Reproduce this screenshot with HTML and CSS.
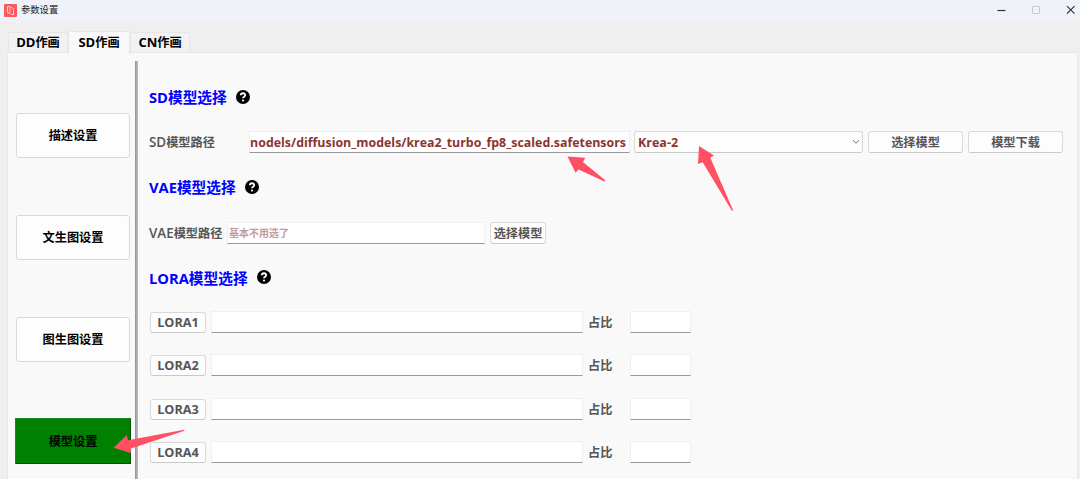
FILE: index.html
```html
<!DOCTYPE html>
<html lang="zh-CN">
<head>
<meta charset="utf-8">
<title>参数设置</title>
<link rel="stylesheet" href="styles.css">
</head>
<body>
<svg width="0" height="0" class="defs"><symbol id="help" viewBox="0 0 14 14"><circle cx="7" cy="7" r="7" fill="#000"/><path d="M4.8 5.3C4.9 2.6 9.2 2.6 9.2 5.1C9.2 6.7 7 6.7 7 8.3" fill="none" stroke="#fff" stroke-width="1.8"/><circle cx="7" cy="10.5" r="1.1" fill="#fff"/></symbol></svg>
<header class="titlebar">
  <svg class="app-icon" width="13" height="13" viewBox="0 0 13 13"><rect width="13" height="13" rx="1" fill="#fb5a5c"/><path d="M3.500 2.500H6V9.500L3.500 8.500ZM6.500 3.500H8L9.500 5V10.500H7" fill="none" stroke="#ffc4c3" stroke-width="1"/></svg>
  <span class="title">参数设置</span>
  <svg class="controls" width="84" height="22" viewBox="0 0 84 22" fill="none"><path d="M1.500 10.500H9.500" stroke="#333" stroke-width="1.2"/><rect x="36.5" y="6.500" width="7" height="7" rx=".5" stroke="#c7cbd0"/><path d="M71 6.2L78.500 13.700M78.500 6.200L71 13.700" stroke="#333" stroke-width="1.200"/></svg>
</header>
<nav class="tabs">
  <div class="tab"><span class="latin">DD</span>作画</div>
  <div class="tab active"><span class="latin">SD</span>作画</div>
  <div class="tab"><span class="latin">CN</span>作画</div>
</nav>
<main class="panel">
  <aside class="sidebar">
    <div class="side-btn">描述设置</div>
    <div class="side-btn">文生图设置</div>
    <div class="side-btn">图生图设置</div>
    <div class="side-btn selected">模型设置</div>
  </aside>
  <div class="divider"></div>
  <section class="content">
    <h2 class="heading h-sd"><span>SD模型选择</span><svg class="help"><use href="#help"/></svg></h2>
    <div class="row sd-row">
      <span class="label sd-label"><span class="latin">SD</span>模型路径</span>
      <div class="field path"><span>nodels/diffusion_models/krea2_turbo_fp8_scaled.safetensors</span></div>
      <div class="btn combo"><span>Krea-2</span><svg width="8" height="6" viewBox="0 0 8 6"><path d="M1 1L4 4.300L7 1" fill="none" stroke="#777"/></svg></div>
      <div class="btn wide">选择模型</div>
      <div class="btn wide">模型下载</div>
    </div>
    <h2 class="heading h-vae"><span>VAE模型选择</span><svg class="help"><use href="#help"/></svg></h2>
    <div class="row vae-row">
      <span class="label vae-label"><span class="latin">VAE</span>模型路径</span>
      <div class="field vae">基本不用选了</div>
      <div class="btn pick">选择模型</div>
    </div>
    <h2 class="heading h-lora"><span>LORA模型选择</span><svg class="help"><use href="#help"/></svg></h2>
    <div class="loras">
      <div class="row"><div class="btn lora">LORA1</div><div class="field file"></div><span class="label ratio">占比</span><div class="field num"></div></div>
      <div class="row"><div class="btn lora">LORA2</div><div class="field file"></div><span class="label ratio">占比</span><div class="field num"></div></div>
      <div class="row"><div class="btn lora">LORA3</div><div class="field file"></div><span class="label ratio">占比</span><div class="field num"></div></div>
      <div class="row"><div class="btn lora">LORA4</div><div class="field file"></div><span class="label ratio">占比</span><div class="field num"></div></div>
    </div>
  </section>
</main>
<svg class="arrows" width="1080" height="479" viewBox="0 0 1080 479" fill="#ff5163">
  <path d="M567.500 156.500L585.300 157.700L583 162L605.500 180.500L604.500 181.500L578.500 169.500L575.500 172.800Z"/>
  <path d="M699 146L714 155.600L710.300 157.800L733 210L732 211L702.700 162.200L698 164Z"/>
  <path d="M113.500 447.700L126.700 435L128 440.200L184 429.700L184.500 430.800L131 448.500L130.700 453Z"/>
</svg>
</body>
</html>
```
FILE: styles.css
```css
* { box-sizing: border-box; }
body {
  margin: 0;
  width: 1080px;
  height: 479px;
  overflow: hidden;
  background: #efefef;
  color: #555;
  font: 600 12.2px/20px "Open Sans", "Noto Sans CJK SC", sans-serif;
  white-space: nowrap;
  display: flex;
  flex-direction: column;
}
.defs { position: absolute; }
.titlebar {
  height: 22px;
  flex: none;
  background: #eff3f9;
  display: flex;
  align-items: center;
  padding: 0 0 2px 4px;
}
.title {
  margin-left: 4px;
  color: #222;
  font-size: 9.3px;
  font-weight: 400;
}
.controls { margin: 2px 0 0 auto; }
.tabs {
  display: flex;
  align-items: flex-end;
  flex: none;
  height: 31px;
  padding-left: 8px;
  color: #000;
  font-weight: 700;
}
.tab {
  width: 60px;
  height: 21px;
  border: 1px solid #e7e7e7;
  border-bottom: 0;
  background: #f2f2f2;
  text-align: center;
  line-height: 18px;
}
.tab .latin { font-size: 13px; }
.tab.active {
  width: 62px;
  height: 23px;
  background: #f9f9f9;
  z-index: 1;
  margin-bottom: -1px;
  line-height: 20px;
}
.panel {
  flex: 1;
  min-height: 0;
  margin: -1px 2px 0 7px;
  border: 1px solid #e8e8e8;
  border-bottom: 0;
  background: #f9f9f9;
  display: flex;
}
.sidebar {
  width: 127px;
  padding: 60px 0 0 8px;
  display: flex;
  flex-direction: column;
  gap: 57px;
}
.side-btn {
  flex: none;
  width: 114px;
  height: 45px;
  border: 1px solid #d9d9d9;
  border-radius: 3px;
  background: #fdfdfd;
  color: #000;
  font-weight: 700;
  text-align: center;
  line-height: 44px;
}
.side-btn.selected {
  width: 116px;
  height: 46px;
  margin: -1px 0 0 -1px;
  border-color: #168a16 #0b4d0b #0b4d0b #168a16;
  border-radius: 0;
  background: #008000;
  line-height: 46px;
}
.divider {
  width: 3px;
  margin-top: 8px;
  background: #aaa;
  border-left: 1px solid #999;
  border-right: 1px solid #b8b8b8;
}
.content { padding: 32px 0 0 11px; flex: 1; }
.heading {
  height: 24px;
  margin: 0;
  display: flex;
  align-items: center;
  gap: 9px;
  color: #00f;
  font-size: 14.700px;
  font-weight: 700;
  line-height: 24px;
}
.h-lora span { padding-top: 1px; }
.help { width: 14px; height: 14px; }
.row { display: flex; height: 22px; }
.label { line-height: 21px; flex: none; }
.label .latin { font-size: 13.4px; }
.field, .btn { flex: none; height: 22px; background: #fff; }
.field {
  border: 1px solid #efefef;
  border-bottom-color: #999;
}
.btn {
  border: 1px solid #d9d9d9;
  border-bottom-color: #c8c8c8;
  border-radius: 3px;
  background: #fdfdfd;
  text-align: center;
  line-height: 19px;
}
.sd-row { margin-top: 22px; }
.sd-label { width: 100px; line-height: 23px; }
.path {
  width: 381px;
  padding-right: 3px;
  display: flex;
  justify-content: flex-end;
  color: #8b3530;
  font-size: 12.4px;
  font-weight: 700;
  line-height: 21px;
}
.combo {
  width: 229px;
  margin-left: 4px;
  padding: 0 2px 0 3px;
  display: flex;
  justify-content: space-between;
  align-items: center;
  color: #8b3530;
  font-size: 12.5px;
  font-weight: 700;
}
.sd-row .wide { width: 95px; margin-left: 5px; line-height: 21px; }
.h-vae { margin-top: 22px; }
.vae-row { margin-top: 23px; }
.vae-label { width: 78px; line-height: 23px; }
.vae {
  width: 258px;
  padding-left: 1px;
  color: #c49a98;
  font-size: 10px;
  line-height: 21px;
}
.pick { width: 56px; margin-left: 5px; line-height: 21px; }
.h-lora { margin-top: 21px; }
.loras {
  padding: 22px 0 0 1px;
  display: flex;
  flex-direction: column;
  gap: 21.400px;
}
.lora {
  width: 56px;
  height: 21px;
  margin-top: 1px;
  font-size: 12.7px;
  font-weight: 700;
}
.file { width: 372px; margin-left: 5px; }
.ratio { width: 47px; padding-left: 5px; line-height: 23px; }
.num { width: 61px; }
.arrows {
  position: absolute;
  left: 0;
  top: 0;
  pointer-events: none;
}
```
